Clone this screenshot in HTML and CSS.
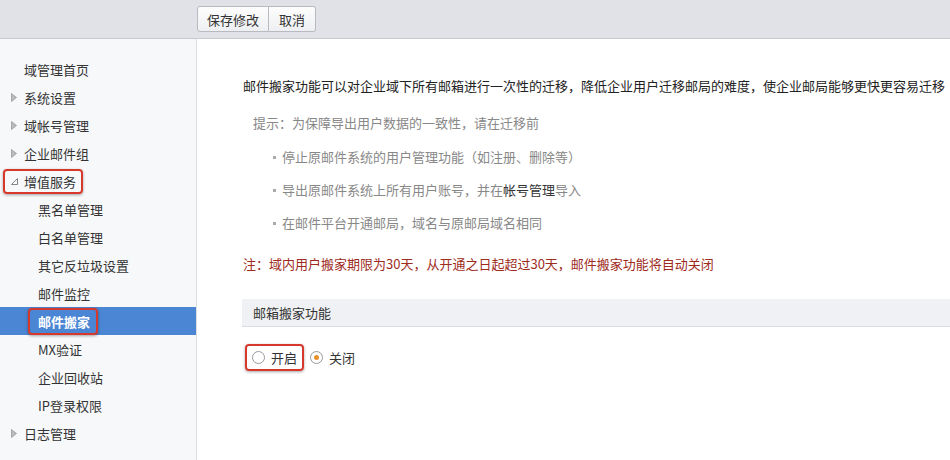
FILE: index.html
```html
<!DOCTYPE html>
<html lang="zh-CN">
<head>
    <meta charset="UTF-8">
    <title>邮件搬家</title>
    <link rel="stylesheet" href="styles.css">
</head>
<body>
    <div class="topbar">
        <div class="topbar-spacer"></div>
        <div class="btn-group">
            <button class="btn">保存修改</button>
            <button class="btn">取消</button>
        </div>
    </div>
    <div class="layout">
        <ul class="sidebar">
            <li class="nav-item leaf">域管理首页</li>
            <li class="nav-item"><span class="arrow"><svg width="6" height="9" viewBox="0 0 6 9"><path d="M0.5 0.5 L5.5 4.5 L0.5 8.5 Z" fill="#bbb" stroke="#999" stroke-width="0.8"/></svg></span>系统设置</li>
            <li class="nav-item"><span class="arrow"><svg width="6" height="9" viewBox="0 0 6 9"><path d="M0.5 0.5 L5.5 4.5 L0.5 8.5 Z" fill="#bbb" stroke="#999" stroke-width="0.8"/></svg></span>域帐号管理</li>
            <li class="nav-item"><span class="arrow"><svg width="6" height="9" viewBox="0 0 6 9"><path d="M0.5 0.5 L5.5 4.5 L0.5 8.5 Z" fill="#bbb" stroke="#999" stroke-width="0.8"/></svg></span>企业邮件组</li>
            <li class="nav-item open"><span class="mark"><span class="arrow"><svg width="7" height="7" viewBox="0 0 7 7"><path d="M6.5 0.5 L6.5 6.5 L0.5 6.5 Z" fill="#fff" stroke="#777" stroke-width="0.9"/></svg></span>增值服务</span></li>
            <li class="nav-item sub">黑名单管理</li>
            <li class="nav-item sub">白名单管理</li>
            <li class="nav-item sub">其它反垃圾设置</li>
            <li class="nav-item sub">邮件监控</li>
            <li class="nav-item sub active"><span class="mark">邮件搬家</span></li>
            <li class="nav-item sub">MX验证</li>
            <li class="nav-item sub">企业回收站</li>
            <li class="nav-item sub">IP登录权限</li>
            <li class="nav-item"><span class="arrow"><svg width="6" height="9" viewBox="0 0 6 9"><path d="M0.5 0.5 L5.5 4.5 L0.5 8.5 Z" fill="#bbb" stroke="#999" stroke-width="0.8"/></svg></span>日志管理</li>
        </ul>
        <div class="main">
            <p class="intro">邮件搬家功能可以对企业域下所有邮箱进行一次性的迁移，降低企业用户迁移邮局的难度，使企业邮局能够更快更容易迁移</p>
            <p class="tip">提示：为保障导出用户数据的一致性，请在迁移前</p>
            <ul class="steps">
                <li>停止原邮件系统的用户管理功能（如注册、删除等）</li>
                <li>导出原邮件系统上所有用户账号，并在<span class="link">帐号管理</span>导入</li>
                <li>在邮件平台开通邮局，域名与原邮局域名相同</li>
            </ul>
            <p class="note">注：域内用户搬家期限为30天，从开通之日起超过30天，邮件搬家功能将自动关闭</p>
            <div class="section-title">邮箱搬家功能</div>
            <div class="options">
                <label class="option mark"><span class="radio"></span>开启</label>
                <label class="option"><span class="radio checked"></span>关闭</label>
            </div>
        </div>
    </div>
</body>
</html>
```

FILE: styles.css
```css
body {
    margin: 0;
    font-family: "Noto Sans CJK SC", "Liberation Sans", sans-serif;
    font-size: 13px;
    color: #333;
    background: #fff;
    height: 460px;
    overflow: hidden;
}

.topbar {
    display: flex;
    align-items: center;
    height: 38px;
    background: #e1e2e8;
    border-bottom: 1px solid #c9cad0;
}

.topbar-spacer {
    width: 197px;
    flex-shrink: 0;
}

.btn-group {
    display: flex;
}

.btn {
    height: 26px;
    padding: 0 9px;
    font-family: inherit;
    font-size: 13px;
    color: #333;
    background: linear-gradient(#fdfdfd, #eeeff2);
    border: 1px solid #b9babf;
    border-radius: 3px 0 0 3px;
    cursor: pointer;
}

.btn + .btn {
    border-left: none;
    padding: 0 10px;
    border-radius: 0 3px 3px 0;
}

.layout {
    display: flex;
    height: 421px;
}

.sidebar {
    list-style: none;
    margin: 0;
    padding: 16px 0 0;
    width: 196px;
    flex-shrink: 0;
    background: #f7f8fa;
    border-right: 1px solid #dcdde2;
}

.nav-item {
    display: flex;
    align-items: center;
    height: 28px;
    padding-left: 11px;
    color: #333;
}

.nav-item.leaf {
    padding-left: 24px;
}

.nav-item.sub {
    padding-left: 38px;
}

.arrow {
    display: inline-flex;
    width: 13px;
}

.nav-item.open .mark {
    display: inline-flex;
    align-items: center;
    margin-left: -8px;
    padding: 0 5px 0 6px;
    height: 21px;
}

.nav-item.active {
    background: #4a86d4;
    color: #fff;
    font-weight: bold;
}

.nav-item.active .mark {
    margin-left: -10px;
    padding: 0 6px 0 8px;
    height: 23px;
    line-height: 23px;
}

.mark {
    border: 2px solid #d7382c;
    border-radius: 4px;
    box-shadow: 0 1px 3px rgba(0, 0, 0, 0.35);
}

.main {
    flex: 1;
    padding: 37px 0 0 46px;
}

.main p {
    margin: 0;
    line-height: 20px;
}

.intro {
    color: #222;
    white-space: nowrap;
}

.tip {
    margin-top: 17px !important;
    padding-left: 10px;
    color: #888;
}

.steps {
    list-style: none;
    margin: 14px 0 0;
    padding: 0 0 0 30px;
    color: #888;
}

.steps li {
    display: flex;
    align-items: center;
    line-height: 20px;
    margin-bottom: 13px;
}

.steps li::before {
    content: "";
    width: 3px;
    height: 3px;
    background: #aaa;
    margin-right: 6px;
}

.steps li:last-child {
    margin-bottom: 0;
}

.link {
    color: #333;
}

.note {
    margin-top: 21px !important;
    color: #9e2b1d;
}

.section-title {
    margin: 25px 0 0 -1px;
    height: 27px;
    line-height: 27px;
    padding-left: 11px;
    background: #f0f1f4;
    border-bottom: 1px solid #dcdde1;
    color: #333;
}

.options {
    display: flex;
    align-items: center;
    margin-top: 17px;
    padding-left: 2px;
}

.option {
    display: inline-flex;
    align-items: center;
    height: 23px;
    margin-right: 6px;
    color: #333;
}

.option.mark {
    padding: 0 5px;
}

.radio {
    width: 11px;
    height: 11px;
    border: 1px solid #999;
    border-radius: 50%;
    background: #fff;
    margin-right: 6px;
    display: inline-flex;
    align-items: center;
    justify-content: center;
}

.radio.checked::after {
    content: "";
    width: 5px;
    height: 5px;
    border-radius: 50%;
    background: #e8912c;
}
```
